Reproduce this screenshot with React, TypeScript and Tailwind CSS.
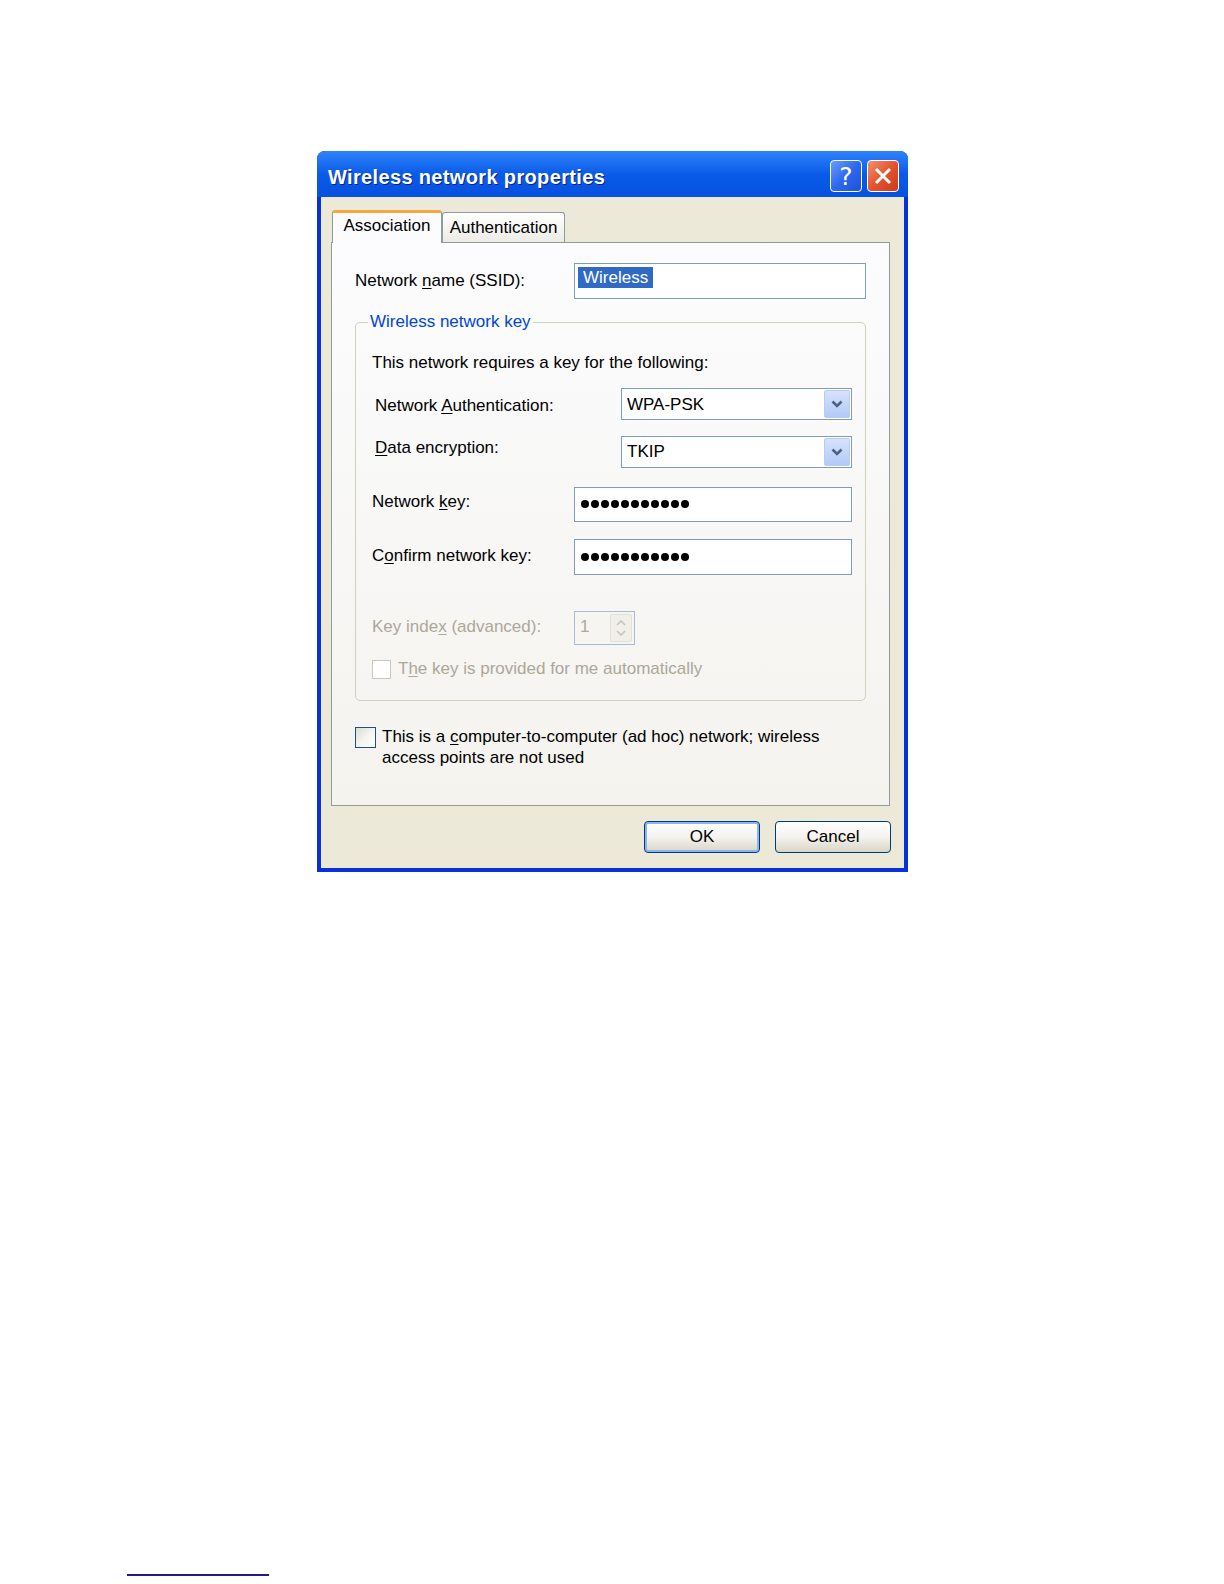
import React from 'react';

const font = { fontFamily: '"Liberation Sans", Arial, sans-serif' };

const Combo: React.FC<{ value: string }> = ({ value }) => (
  <div className="w-[231px] shrink-0 h-[32px] border border-[#7f9db9] bg-white flex items-center justify-between pl-[5px] pr-[1px]">
    <span className="text-[17px] text-black leading-none">{value}</span>
    <div className="w-[26px] h-[28px] rounded-[2px] border border-[#b9cbf3] bg-gradient-to-b from-[#d7e3fd] to-[#b3c9f7] flex items-center justify-center">
      <svg width="14" height="10" viewBox="0 0 14 10">
        <path d="M2.5 2.5 L7 7 L11.5 2.5" stroke="#4d6185" strokeWidth="2.6" fill="none" />
      </svg>
    </div>
  </div>
);

const Dots: React.FC = () => (
  <div className="flex items-center gap-[2px] pl-[6px]">
    {Array.from({ length: 11 }).map((_, i) => (
      <span key={i} className="w-[8px] h-[8px] rounded-full bg-black" />
    ))}
  </div>
);

const XpButton: React.FC<{ label: string; focused?: boolean }> = ({ label, focused }) => (
  <button
    className={
      'w-[116px] h-[32px] rounded-[4px] border border-[#003c74] bg-gradient-to-b from-[#ffffff] via-[#f4f3ee] to-[#d9d5c8] text-[17px] text-black flex items-center justify-center ' +
      (focused ? 'shadow-[inset_0_0_0_2px_#8cb4f2]' : '')
    }
  >
    {label}
  </button>
);

export default function App() {
  return (
    <div className="min-h-[1584px] bg-white pt-[151px]" style={font}>
      {/* Dialog */}
      <div className="ml-[317px] w-[591px] h-[721px] flex flex-col rounded-t-[8px] bg-[#0831d9] px-[4px] pb-[4px]">
        {/* Title bar */}
        <div className="-mx-[4px] h-[46px] shrink-0 rounded-t-[8px] bg-gradient-to-b from-[#2f83fb] via-[#0a5be8] to-[#0750e0] flex items-center justify-between pl-[11px] pr-[9px] pt-[5px]">
          <span className="text-white font-bold text-[20px] tracking-[0.35px] [text-shadow:1px_1px_0_#0a2380]">
            Wireless network properties
          </span>
          <div className="flex items-center gap-[5px] -mt-[1px]">
            <div className="w-[32px] h-[32px] rounded-[4px] border border-white bg-gradient-to-br from-[#6a9cfa] via-[#2d68ee] to-[#1e52d8] flex items-center justify-center">
              <span className="text-white text-[25px] leading-none" style={{ fontFamily: '"DejaVu Sans", sans-serif' }}>?</span>
            </div>
            <div className="w-[32px] h-[32px] rounded-[4px] border border-white bg-gradient-to-br from-[#f0906a] via-[#e3532e] to-[#c93a17] flex items-center justify-center">
              <svg width="20" height="20" viewBox="0 0 20 20">
                <path d="M3 3 L17 17 M17 3 L3 17" stroke="white" strokeWidth="3" />
              </svg>
            </div>
          </div>
        </div>

        {/* Body */}
        <div className="flex-1 bg-[#ece9d8] pl-[10px] pr-[14px] pt-[12px] flex flex-col">
          {/* Tabs */}
          <div className="flex items-end h-[33px] pl-[1px] relative z-10">
            <div className="w-[110px] h-[33px] -mb-[1px] bg-[#fcfcfe] border-x border-[#919b9c] rounded-t-[3px] border-t-[3px] border-t-[#f2a93b] flex items-center justify-center pb-[4px]">
              <span className="text-[17px] text-black">Association</span>
            </div>
            <div className="w-[123px] h-[30px] bg-gradient-to-b from-[#ffffff] to-[#ecebe6] border border-b-0 border-[#919b9c] rounded-t-[3px] flex items-center justify-center">
              <span className="text-[17px] text-black">Authentication</span>
            </div>
          </div>

          {/* Tab panel */}
          <div className="w-[559px] h-[564px] border border-[#919b9c] bg-gradient-to-b from-[#fcfcfe] to-[#f4f3ee] px-[23px] pt-[20px]">
            <div className="flex items-center h-[36px]">
              <span className="w-[219px] text-[17px] text-black">
                Network <u className="underline-offset-2">n</u>ame (SSID):
              </span>
              <div className="w-[292px] h-[36px] border border-[#7f9db9] bg-white flex items-start pl-[3px] pt-[3px]">
                <span className="bg-[#316ac5] text-white text-[17px] leading-[21px] px-[5px]">Wireless</span>
              </div>
            </div>

            {/* Group box */}
            <div className="relative mt-[23px] h-[379px] border border-[#d0d0bf] rounded-[5px] pl-[16px] pr-[13px] pt-[30px]">
              <span className="absolute -top-[12px] left-[12px] px-[2px] bg-[#fbfbfb] text-[17px] text-[#0046d5] leading-[22px]">
                Wireless network key
              </span>

              <div className="text-[17px] text-black leading-[20px]">
                This network requires a key for the following:
              </div>

              <div className="mt-[15px] flex items-center h-[32px]">
                <span className="w-[249px] shrink-0 pl-[3px] text-[17px] text-black pt-[3px]">
                  Network <u className="underline-offset-2">A</u>uthentication:
                </span>
                <Combo value="WPA-PSK" />
              </div>

              <div className="mt-[15px] flex items-center h-[33px]">
                <span className="w-[249px] shrink-0 pl-[3px] text-[17px] text-black -mt-[8px]">
                  <u className="underline-offset-2">D</u>ata encryption:
                </span>
                <Combo value="TKIP" />
              </div>

              <div className="mt-[19px] flex items-center h-[35px]">
                <span className="w-[202px] shrink-0 text-[17px] text-black -mt-[5px]">
                  Network <u className="underline-offset-2">k</u>ey:
                </span>
                <div className="w-[278px] shrink-0 h-[35px] border border-[#7f9db9] bg-white flex items-center -mt-[1px]">
                  <Dots />
                </div>
              </div>

              <div className="mt-[17px] flex items-center h-[36px]">
                <span className="w-[202px] shrink-0 text-[17px] text-black -mt-[3px]">
                  C<u className="underline-offset-2">o</u>nfirm network key:
                </span>
                <div className="w-[278px] shrink-0 h-[36px] border border-[#7f9db9] bg-white flex items-center">
                  <Dots />
                </div>
              </div>

              <div className="mt-[36px] flex items-center h-[34px]">
                <span className="w-[202px] shrink-0 text-[17px] text-[#aca899] -mt-[3px]">
                  Key inde<u className="underline-offset-2">x</u> (advanced):
                </span>
                <div className="w-[61px] h-[34px] border border-[#a7bad6] bg-[#f6f5f1] flex items-stretch">
                  <span className="flex-1 pl-[5px] text-[17px] text-[#aca899] flex items-center -mt-[2px]">1</span>
                  <div className="w-[22px] flex flex-col items-center justify-center gap-[4px] bg-[#f0efea] my-[2px] mr-[2px] rounded-[2px] border border-[#e2e0d8]">
                    <svg width="10" height="6" viewBox="0 0 10 6">
                      <path d="M1 5 L5 1 L9 5" stroke="#c6c3b8" strokeWidth="1.6" fill="none" />
                    </svg>
                    <svg width="10" height="6" viewBox="0 0 10 6">
                      <path d="M1 1 L5 5 L9 1" stroke="#c6c3b8" strokeWidth="1.6" fill="none" />
                    </svg>
                  </div>
                </div>
              </div>

              <div className="mt-[14px] flex items-center h-[20px] gap-[7px]">
                <span className="w-[19px] h-[19px] border border-[#cac8bb] bg-white" />
                <span className="text-[17px] text-[#aca899]">
                  T<u className="underline-offset-2">h</u>e key is provided for me automatically
                </span>
              </div>
            </div>

            {/* Ad hoc */}
            <div className="mt-[26px] flex items-start gap-[6px]">
              <span className="w-[21px] h-[21px] shrink-0 border border-[#1c5180] bg-gradient-to-br from-[#dcdcd6] via-[#f4f4f0] to-[#ffffff]" />
              <span className="text-[17px] text-black leading-[21px] -mt-[1px]">
                This is a <u className="underline-offset-2">c</u>omputer-to-computer (ad hoc) network; wireless
                <br />
                access points are not used
              </span>
            </div>
          </div>

          {/* Buttons */}
          <div className="mt-[15px] flex justify-end gap-[15px] w-[560px]">
            <XpButton label="OK" focused />
            <XpButton label="Cancel" />
          </div>
        </div>
      </div>

      {/* Footnote rule */}
      <div className="ml-[127px] mt-[702px] w-[142px] h-[2px] bg-[#1f1a8f]" />
    </div>
  );
}
